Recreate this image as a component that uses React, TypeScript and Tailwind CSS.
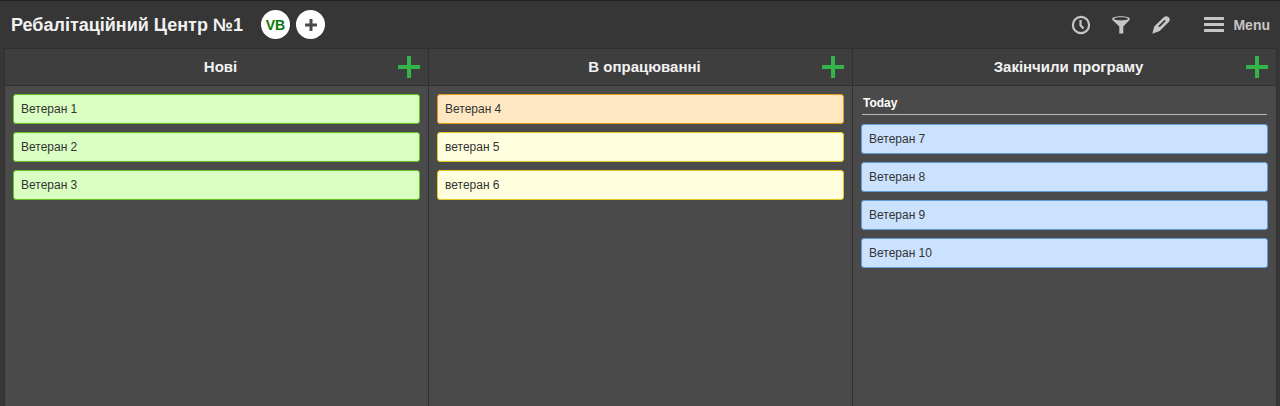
import clsx from "clsx";

type Tone = "green" | "orange" | "yellow" | "blue";

type Card = {
    title: string;
    tone: Tone;
};

type ColumnData = {
    title: string;
    group?: string;
    cards: Card[];
};

const tones: Record<Tone, string> = {
    green: "bg-[#daffc2] border-[#62c421]",
    orange: "bg-[#ffe8c1] border-[#e69a17]",
    yellow: "bg-[#ffffdf] border-[#e6c81e]",
    blue: "bg-[#cbe2ff] border-[#639ad8]",
};

const columns: ColumnData[] = [
    {
        title: "Нові",
        cards: [
            { title: "Ветеран 1", tone: "green" },
            { title: "Ветеран 2", tone: "green" },
            { title: "Ветеран 3", tone: "green" },
        ],
    },
    {
        title: "В опрацюванні",
        cards: [
            { title: "Ветеран 4", tone: "orange" },
            { title: "ветеран 5", tone: "yellow" },
            { title: "ветеран 6", tone: "yellow" },
        ],
    },
    {
        title: "Закінчили програму",
        group: "Today",
        cards: [
            { title: "Ветеран 7", tone: "blue" },
            { title: "Ветеран 8", tone: "blue" },
            { title: "Ветеран 9", tone: "blue" },
            { title: "Ветеран 10", tone: "blue" },
        ],
    },
];

function PlusIcon({ className }: { className?: string }) {
    return (
        <svg viewBox="0 0 22 22" className={className} fill="currentColor" aria-hidden="true">
            <rect x="9" y="0" width="4" height="22" rx="0.6" />
            <rect x="0" y="9" width="22" height="4" rx="0.6" />
        </svg>
    );
}

function ClockIcon() {
    return (
        <svg viewBox="0 0 20 20" className="size-5" fill="none" stroke="currentColor" aria-hidden="true">
            <circle cx="10" cy="10" r="8.1" strokeWidth="2.2" />
            <path d="M9.500 5v5.300l3 3.200" strokeWidth="2.2" />
        </svg>
    );
}

function FunnelIcon() {
    return (
        <svg viewBox="0 0 20 20" className="size-5" fill="currentColor" aria-hidden="true">
            <path
                fillRule="evenodd"
                d="M10 1.200c5 0 8.800 1 8.800 2.700 0 .6-.3 1.200-.8 1.700L12.300 11.500v6.900H8.300V11.500L2 5.600c-.5-.5-.8-1.100-.8-1.700 0-1.700 3.800-2.700 8.800-2.700zM10 2.200c-3.900 0-7 .7-7 1.600S6.100 5.400 10 5.400s7-.7 7-1.600-3.100-1.600-7-1.600z"
            />
        </svg>
    );
}

function PencilIcon() {
    return (
        <svg viewBox="0 0 20 20" className="size-5" fill="currentColor" aria-hidden="true">
            <path
                fillRule="evenodd"
                d="M1.300 18.700 3.200 11.600 12.700 2.300C14 1 15.700.8 17.400 2c1.700 1.300 1.900 3.300.6 4.700L8.700 15.900zM7.300 11 8.600 12.200 14.300 6.500c.8-.8-.4-2-1.200-1.200z"
            />
        </svg>
    );
}

function MenuIcon() {
    return (
        <svg viewBox="0 0 20 15" className="h-[15px] w-5" fill="currentColor" aria-hidden="true">
            <rect y="0" width="20" height="3" rx="0.5" />
            <rect y="6" width="20" height="3" rx="0.5" />
            <rect y="12" width="20" height="3" rx="0.5" />
        </svg>
    );
}

function Header() {
    return (
        <header className="flex h-12 items-center justify-between border-t border-[#202020] pr-[10px] pl-[11px]">
            <div className="flex items-center">
                <h1 className="text-lg leading-6 font-bold text-[#f2f2f2]">Ребалітаційний Центр №1</h1>
                <button
                    type="button"
                    className="ml-[18px] flex size-[29px] items-center justify-center rounded-full bg-white text-sm font-bold text-[#087808]"
                >
                    VB
                </button>
                <button
                    type="button"
                    aria-label="Add member"
                    className="ml-[6px] flex size-[29px] items-center justify-center rounded-full bg-white text-[#484848]"
                >
                    <svg viewBox="0 0 12 12" className="size-3" fill="currentColor" aria-hidden="true">
                        <path d="M4.500 0h3v4.500H12v3H7.500V12h-3V7.500H0v-3h4.500z" />
                    </svg>
                </button>
            </div>

            <div className="flex items-center text-[#c6c6c6]">
                <div className="flex items-center gap-5">
                    <button type="button" aria-label="Activity">
                        <ClockIcon />
                    </button>
                    <button type="button" aria-label="Filter">
                        <FunnelIcon />
                    </button>
                    <button type="button" aria-label="Edit">
                        <PencilIcon />
                    </button>
                </div>
                <button type="button" className="ml-[33px] flex items-center gap-[9px] text-sm font-bold">
                    <MenuIcon />
                    Menu
                </button>
            </div>
        </header>
    );
}

function Column({ title, group, cards }: ColumnData) {
    return (
        <section className="flex flex-1 flex-col border-r border-[#303030]">
            <div className="grid h-[37px] grid-cols-[1fr_auto_1fr] items-center border-b border-[#303030] bg-[#3e3e3e] pr-2 pl-4">
                <h2 className="col-start-2 text-[15px] leading-5 font-bold text-[#f2f2f2]">{title}</h2>
                <button type="button" aria-label="Add card" className="justify-self-end text-[#34b54a]">
                    <PlusIcon className="size-[22px]" />
                </button>
            </div>

            <div className="flex flex-1 flex-col gap-2 p-2">
                {group && (
                    <h3 className="mx-px mb-px border-b border-[#b8b8b8] pb-[2px] pl-px text-xs leading-[18px] font-bold text-white">
                        {group}
                    </h3>
                )}
                <ul className="flex flex-col gap-2">
                    {cards.map((card) => (
                        <li
                            key={card.title}
                            className={clsx(
                                "flex h-[30px] items-center rounded-[3px] border px-[7px] text-xs text-[#333]",
                                tones[card.tone],
                            )}
                        >
                            {card.title}
                        </li>
                    ))}
                </ul>
            </div>
        </section>
    );
}

export default function App() {
    return (
        <div className="flex min-h-screen flex-col bg-[#363636] font-['Liberation_Sans',Arial,sans-serif]">
            <Header />
            <main className="mr-[3px] ml-1 flex flex-1 border-t border-l border-[#303030] bg-[#4a4a4a]">
                {columns.map((column) => (
                    <Column key={column.title} {...column} />
                ))}
            </main>
        </div>
    );
}
